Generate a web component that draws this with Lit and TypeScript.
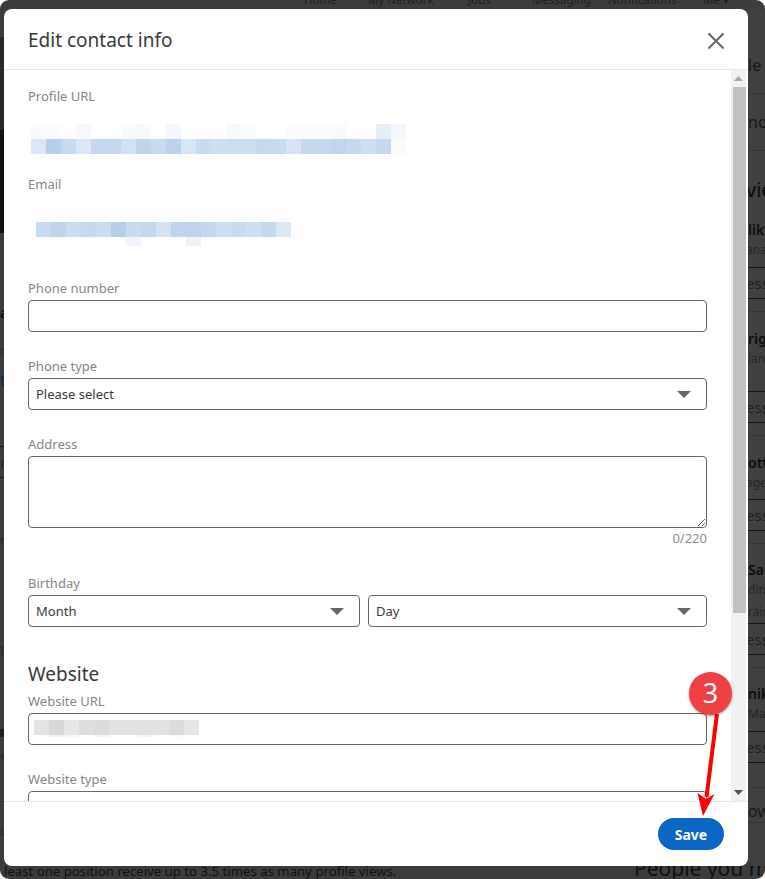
import { LitElement, html, css, svg } from "lit";
import { customElement } from "lit/decorators.js";

type Row = [number, string?, string?];

const RIGHT: Row[] = [
  [28], [57, "le", "md line-soft"], [57, "no", "md line-soft"], [19], [38, "vie", "big cut"], [11],
  [20, "lik", "name"], [20, "ana", "sub cut"], [8], [32, "ess", "btn cut"],
  [13, "", "line-soft"], [16], [20, "rig", "name"], [20, "lan", "sub"], [23], [32, "ess", "btn cut"],
  [13, "", "line-soft"], [16], [20, "ott", "name"], [20, "age", "sub cut"], [7], [32, "ess", "btn cut"],
  [13, "", "line-soft"], [15], [20, "Sar", "name"], [21, "dln", "sub"], [22, "rain", "sub"], [1], [32, "ess", "btn cut"],
  [13, "", "line-soft"], [15], [20, "nik", "name"], [21, "Ma", "sub"], [7], [32, "ess", "btn cut"],
  [25, "", "line-soft"], [12], [23, "ow", "md line-soft"], [13], [30],
];

const LEFT: Row[] = [
  [28], [93, "", "photo-a"], [103, "", "photo-b"], [69], [20, "a", "name"], [18], [20, "r", "sub"], [10],
  [20, "t", "link"], [56], [32, "r", "btn link"], [52], [20, "n", "sub"], [90], [20, "I", "sub"], [69],
  [8, "", "block"], [8], [20, "e", "sub"], [56], [20, "L", "sub"], [25],
];

const PROFILE_A = ["#f9fafd", "#fbfcfe", "#fff", "#f8f9fd", "#fff", "#fff", "#f9fafd", "#f8f9fd", "#fff", "#f4f7fb", "#fff", "#fff", "#fff", "#f7f9fc", "#fafbfd", "#fff", "#fff", "#fbfcfd", "#fafbfd", "#fafbfd", "#f8fafc", "#fff", "#fff", "#e7eef8", "#f3f6fb"];
const PROFILE_B = ["#dce7f5", "#b5d0ea", "#c7daf0", "#dce7f5", "#c4d7ee", "#c6d8ef", "#d3e1f2", "#c0d5ec", "#c9daef", "#bcd2eb", "#d8e5f4", "#c9dbf0", "#cfdff2", "#cddef1", "#cddef1", "#c6d9ee", "#c9dcef", "#d8e4f3", "#c5d8ee", "#c5d8ee", "#c1d5ec", "#c7d9ee", "#cddef1", "#c5d8ee", "#fafbfd"];
const EMAIL_A = ["#c8dbf0", "#c0d5ec", "#cbddf1", "#c6daef", "#cbddf1", "#b6cfea", "#c9dbf0", "#c3d7ed", "#d4e2f2", "#bfd4ec", "#bfd4ec", "#c3d7ed", "#cfdef1", "#c9dbf0", "#cfdef1", "#c3d7ed", "#dde8f5"];
const EMAIL_B = ["#fff", "#fff", "#fff", "#fff", "#fff", "#fff", "#f1f5fb", "#fff", "#fff", "#fff", "#eef3fa"];
const WEB_A = ["#e3e3e3", "#d8d8d8", "#e6e6e6", "#dedede", "#dcdcdc", "#e2e2e2", "#e2e2e2", "#e2e2e2", "#e2e2e2", "#dcdcdc", "#e6e6e6"];
const WEB_B = ["#fff", "#f4f4f4", "#f6f6f6", "#fff", "#f4f4f4", "#fff", "#fff", "#f4f4f4", "#fff", "#fafafa"];

@customElement("app-root")
export class AppRoot extends LitElement {
  static styles = css`
    :host {
      display: block;
      position: relative;
      width: 765px;
      height: 879px;
      overflow: hidden;
      background: #fff;
      font-family: "Noto Sans", "Open Sans", sans-serif;
    }
    .screen {
      height: 879px;
      border-radius: 9px;
      background: #3c3c3c;
      overflow: hidden;
      display: flex;
      flex-direction: column;
      color: #141414;
    }
    .nav {
      height: 9px;
      flex: none;
      overflow: hidden;
      display: grid;
      grid-template-columns: 64px 100px 64px 76px 95px 40px;
      padding-left: 304px;
      font-size: 11.5px;
      line-height: 12px;
      color: #1e1e1e;
    }
    .nav span { margin-top: -6px; white-space: nowrap; }
    .middle { flex: 1; display: flex; justify-content: space-between; min-height: 0; }
    .strip { display: flex; flex-direction: column; overflow: hidden; flex: none; }
    .strip.l { width: 4px; }
    .strip.r { width: 17px; background: #404040; }
    .row {
      flex: none;
      display: flex;
      align-items: center;
      white-space: nowrap;
      box-sizing: border-box;
      overflow: hidden;
    }
    .md { font-size: 16px; color: #171717; }
    .big { font-size: 20px; color: #0b0b0b; }
    .name { font-size: 14px; font-weight: 600; color: #0d0d0d; }
    .sub { font-size: 12px; color: #262626; }
    .btn { font-size: 15px; color: #1f1f1f; border-top: 1px solid #141414; border-bottom: 1px solid #141414; }
    .line-soft { border-bottom: 1px solid #363636; }
    .cut span { margin-left: -2px; }
    .link { color: #0a2a4d; }
    .photo-a { background: #2a2725; }
    .photo-b { background: #101010; }
    .block { background: #14202c; }
    .bottom {
      height: 13px;
      flex: none;
      display: flex;
      justify-content: space-between;
      white-space: nowrap;
      overflow: hidden;
      font-size: 13.2px;
      line-height: 11px;
      color: #0f0f0f;
      padding-left: 4px;
    }
    .bottom .people { font-size: 21px; margin: -3px 0 0 0; width: 131px; }

    .modal {
      position: absolute;
      left: 4px;
      top: 9px;
      width: 744px;
      height: 857px;
      background: #fff;
      border-radius: 8px;
      display: flex;
      flex-direction: column;
      overflow: hidden;
      color: #2b2b2b;
    }
    header {
      flex: none;
      height: 61px;
      box-sizing: border-box;
      border-bottom: 1px solid #e8e8e8;
      display: flex;
      align-items: center;
      justify-content: space-between;
      padding: 0 24px;
    }
    h2 { margin: 2px 0 0; font-size: 19px; font-weight: 400; color: #3a3a3a; }
    .close { display: block; margin: 3px -1px 0 0; }
    .main { flex: 1; min-height: 0; display: flex; }
    .form {
      flex: 1;
      min-width: 0;
      height: 731px;
      overflow: hidden;
      padding: 16px 24px 0;
      box-sizing: border-box;
    }
    label, .label {
      display: block;
      font-size: 13px;
      line-height: 20px;
      height: 20px;
      color: #858585;
    }
    .pix { display: flex; height: 15px; }
    .pix i { display: block; width: 15px; height: 100%; flex: none; }
    .pix.low { height: 9px; }
    .pix.mini { height: 2px; }
    .profile { margin: 18px 0 0 3px; }
    .email-label { margin-top: 20px; }
    .email { margin: 28px 0 0 8px; }
    .phone-label { margin-top: 32px; }
    input, textarea, .select {
      display: block;
      box-sizing: border-box;
      width: 100%;
      height: 32px;
      margin: 2px 0 0;
      border: 1px solid #666;
      border-radius: 4px;
      background: #fff;
      font: inherit;
      font-size: 13px;
      color: #3a3a3a;
      outline: none;
    }
    .field-gap { margin-top: 24px; }
    .select {
      display: flex;
      align-items: center;
      justify-content: space-between;
      padding: 0 15px 0 7px;
    }
    .arrow { display: block; }
    textarea { height: 72px; resize: vertical; padding: 6px 7px; }
    .count {
      text-align: right;
      font-size: 13px;
      line-height: 20px;
      color: #8f8f8f;
    }
    .bday-label { margin-top: 25px; }
    .pair { display: grid; grid-template-columns: 332px 339px; gap: 8px; }
    h3 { margin: 35px 0 0; font-size: 19px; line-height: 24px; font-weight: 400; color: #3a3a3a; height: 24px; }
    .web-label { margin-top: 5px; }
    .web-input {
      position: relative;
      padding: 6px 5px 0;
      height: 32px;
      margin: 2px 0 0;
      border: 1px solid #666;
      border-radius: 4px;
      box-sizing: border-box;
    }
    .scroll {
      flex: none;
      width: 15px;
      margin-right: 2px;
      background: #f1f1f1;
      display: flex;
      flex-direction: column;
      justify-content: space-between;
      height: 731px;
    }
    .scroll .cap { display: flex; height: 17px; align-items: center; justify-content: center; flex: none; }
    .thumb { margin-left: 2px; height: 526px; background: #c1c1c1; flex: none; }
    .track { flex: 1; }
    footer {
      flex: none;
      height: 65px;
      box-sizing: border-box;
      border-top: 1px solid #e8e8e8;
      display: flex;
      justify-content: flex-end;
      align-items: flex-start;
      padding: 16px 24px 0;
    }
    .save {
      width: 66px;
      height: 32px;
      border: 0;
      border-radius: 16px;
      background: #0a66c2;
      color: #fff;
      font: inherit;
      font-size: 14px;
      font-weight: 700;
      padding: 0;
    }
    .note { position: absolute; left: 0; top: 0; pointer-events: none; }
    .badge {
      position: absolute;
      left: 689px;
      top: 672px;
      width: 43px;
      height: 43px;
      border-radius: 50%;
      background: #ef4044;
      color: #fff;
      font-size: 27px;
      line-height: 42px;
      text-align: center;
      box-shadow: 0 1px 3px rgba(0, 0, 0, 0.4);
    }
  `;

  private rows(list: Row[]) {
    return list.map(
      ([h, text, cls]) => html`<div class="row ${cls ?? ""}" style="height:${h}px"><span>${text ?? ""}</span></div>`
    );
  }

  private pixels(list: string[], cls = "") {
    return html`<div class="pix ${cls}">${list.map((c) => html`<i style="background:${c}"></i>`)}</div>`;
  }

  private arrow() {
    return html`<svg class="arrow" width="14" height="7" viewBox="0 0 14 7"><path d="M0 0H14L7 7Z" fill="#666"/></svg>`;
  }

  private select(text: string) {
    return html`<div class="select" role="combobox"><span>${text}</span>${this.arrow()}</div>`;
  }

  render() {
    return html`
      <div class="screen">
        <div class="nav">
          <span>Home</span><span>My Network</span><span>Jobs</span><span>Messaging</span><span>Notifications</span><span>Me ▾</span>
        </div>
        <div class="middle">
          <div class="strip l">${this.rows(LEFT)}</div>
          <div class="strip r">${this.rows(RIGHT)}</div>
        </div>
        <div class="bottom">
          <span>least one position receive up to 3.5 times as many profile views.</span>
          <span class="people">People you ma</span>
        </div>
      </div>

      <section class="modal">
        <header>
          <h2>Edit contact info</h2>
          <svg class="close" width="18" height="18" viewBox="0 0 18 18">
            <path d="M1.5 1.5L16.5 16.5M16.5 1.5L1.5 16.5" stroke="#666" stroke-width="2" fill="none"/>
          </svg>
        </header>
        <div class="main">
          <div class="form">
            <div class="label">Profile URL</div>
            <div class="profile">${this.pixels(PROFILE_A)}${this.pixels(PROFILE_B)}</div>
            <div class="label email-label">Email</div>
            <div class="email">${this.pixels(EMAIL_A)}${this.pixels(EMAIL_B, "low")}</div>
            <label class="phone-label">Phone number</label>
            <input type="text" />
            <label class="field-gap">Phone type</label>
            ${this.select("Please select")}
            <label class="field-gap">Address</label>
            <textarea></textarea>
            <div class="count">0/220</div>
            <label class="bday-label">Birthday</label>
            <div class="pair">${this.select("Month")}${this.select("Day")}</div>
            <h3>Website</h3>
            <label class="web-label">Website URL</label>
            <div class="web-input">${this.pixels(WEB_A)}${this.pixels(WEB_B, "mini")}</div>
            <label class="field-gap">Website type</label>
            <div class="select"></div>
          </div>
          <div class="scroll">
            <div class="cap"><svg width="9" height="5" viewBox="0 0 9 5"><path d="M0 5L4.5 0L9 5Z" fill="#a8a8a8"/></svg></div>
            <div class="thumb"></div>
            <div class="track"></div>
            <div class="cap"><svg width="9" height="5" viewBox="0 0 9 5"><path d="M0 0L4.5 5L9 0Z" fill="#505050"/></svg></div>
          </div>
        </div>
        <footer><button class="save">Save</button></footer>
      </section>

      <svg class="note" width="765" height="879" viewBox="0 0 765 879">
        ${svg`<path d="M717 714L706.5 797" stroke="#f00" stroke-width="4" fill="none"/>
        <path d="M703 816L697.5 793L706 799L714.5 794Z" fill="#f00"/>`}
      </svg>
      <div class="badge">3</div>
    `;
  }
}
